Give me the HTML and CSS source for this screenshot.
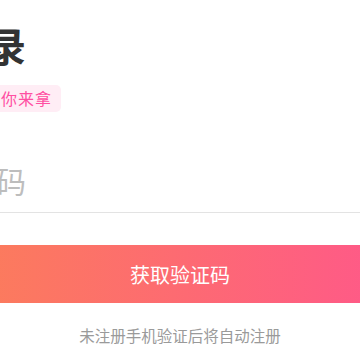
FILE: index.html
```html
<!DOCTYPE html>
<html lang="zh-CN">
<head>
  <meta charset="UTF-8" />
  <meta name="viewport" content="width=device-width, initial-scale=1.0"/>
  <title>登录</title>
  <link rel="stylesheet" href="styles.css">
</head>
<body>
  <div class="page">
    <h1 class="title">请登录</h1>
    <span class="gift-tag">新人好礼等你来拿</span>

    <div class="phone-field">
      <input type="tel" id="phone" placeholder="手机号码">
    </div>

    <button class="code-btn" id="get-code">获取验证码</button>

    <p class="hint">未注册手机验证后将自动注册</p>
  </div>
</body>
</html>
```

FILE: styles.css
```css
body {
  margin: 0;
  overflow: hidden;
  background-color: #fff;
  font-family: "Noto Sans CJK SC", "Noto Sans", sans-serif;
}
.page {
  margin: 0 -94px;
  padding-top: 25px;
}
.title {
  margin: 0;
  font-size: 40px;
  line-height: 40px;
  font-weight: 700;
  color: #333;
}
.gift-tag {
  display: inline-block;
  margin-top: 20px;
  height: 27px;
  line-height: 27px;
  padding: 0 9px 0 10px;
  font-size: 16px;
  letter-spacing: 1px;
  color: #ff4fa2;
  background-color: #ffedf5;
  border-radius: 5px;
}
.phone-field {
  margin-top: 48px;
  padding-bottom: 12px;
  border-bottom: 1px solid #e3e3e3;
}
.phone-field input {
  display: block;
  width: 100%;
  height: 40px;
  padding: 0;
  border: none;
  outline: none;
  font-family: inherit;
  font-size: 30px;
  color: #333;
}
.phone-field input::placeholder {
  color: #bdbdbd;
}
.code-btn {
  display: block;
  width: 100%;
  height: 58px;
  margin-top: 32px;
  border: none;
  border-radius: 29px;
  background: linear-gradient(90deg, #fb8254, #ff5390);
  color: #fff;
  font-family: inherit;
  font-size: 20px;
  cursor: pointer;
}
.hint {
  margin: 21px 0 0;
  text-align: center;
  font-size: 15.5px;
  line-height: 22px;
  color: #9a9a9a;
}
```
